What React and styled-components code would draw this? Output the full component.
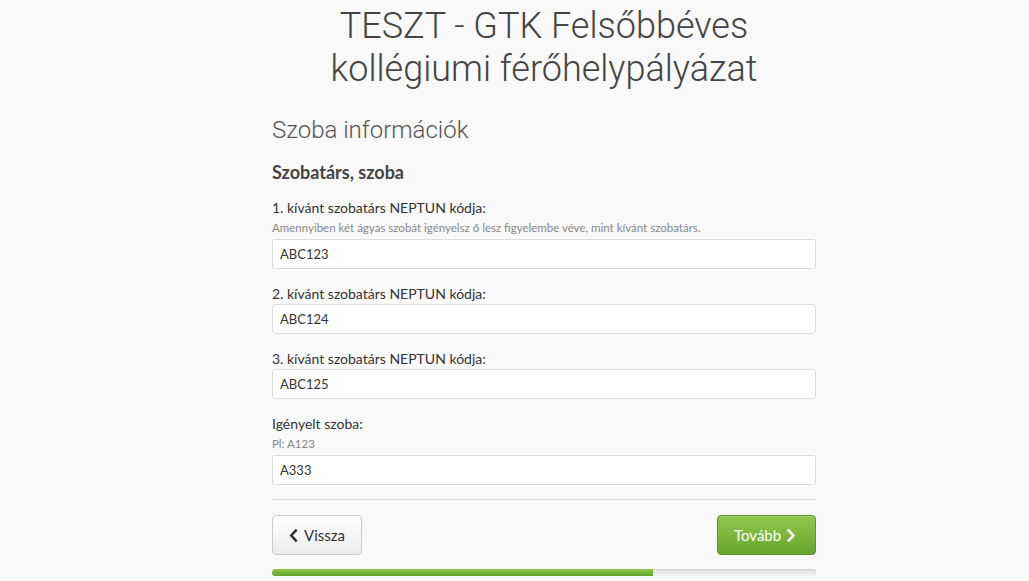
import React from 'react';
import styled, { createGlobalStyle } from 'styled-components';

const GlobalStyle = createGlobalStyle`
  html, body {
    margin: 0;
    padding: 0;
    background: #f9f9f9;
  }
  body {
    font-family: Lato, "Open Sans", sans-serif;
    color: #333;
  }
`;

const FIELDS = [
  { label: '1. kívánt szobatárs NEPTUN kódja:', help: 'Amennyiben két ágyas szobát igényelsz ő lesz figyelembe véve, mint kívánt szobatárs.', value: 'ABC123' },
  { label: '2. kívánt szobatárs NEPTUN kódja:', value: 'ABC124' },
  { label: '3. kívánt szobatárs NEPTUN kódja:', value: 'ABC125' },
  { label: 'Igényelt szoba:', help: 'Pl: A123', value: 'A333' },
];

function App() {
  return (
    <>
      <GlobalStyle />
      <Page>
        <Title>
          TESZT - GTK Felsőbbéves
          <br />
          kollégiumi férőhelypályázat
        </Title>
        <Section>
          <SectionTitle>Szoba információk</SectionTitle>
          <SubTitle>Szobatárs, szoba</SubTitle>
          {FIELDS.map((f) => (
            <Field key={f.label}>
              <Label>{f.label}</Label>
              {f.help && <Help>{f.help}</Help>}
              <Input defaultValue={f.value} />
            </Field>
          ))}
          <Divider />
          <Actions>
            <BackButton>
              <Chevron viewBox="0 0 10 14" left>
                <path d="M7.5 1.5 L2.5 7 L7.5 12.5" />
              </Chevron>
              Vissza
            </BackButton>
            <NextButton>
              Tovább
              <Chevron viewBox="0 0 10 14">
                <path d="M2.5 1.5 L7.5 7 L2.5 12.5" />
              </Chevron>
            </NextButton>
          </Actions>
          <Progress>
            <ProgressFill style={{ width: '70%' }} />
          </Progress>
        </Section>
      </Page>
    </>
  );
}

const Page = styled.div`
  width: 544px;
  margin-left: 272px;
  padding-top: 5px;
`;
const Title = styled.h1`
  margin: 0;
  font-family: Roboto, sans-serif;
  font-weight: 300;
  font-size: 36px;
  line-height: 43px;
  color: #444;
  text-align: center;
  white-space: nowrap;
`;
const Section = styled.div`
  padding-top: 25px;
`;
const SectionTitle = styled.h2`
  margin: 0;
  font-family: Roboto, sans-serif;
  font-weight: 300;
  font-size: 24px;
  line-height: 28px;
  color: #555;
`;
const SubTitle = styled.h3`
  margin: 18px 0 17px;
  font-size: 18px;
  line-height: 20px;
  font-weight: 700;
  color: #444;
`;
const Field = styled.div`
  display: flex;
  flex-direction: column;
  margin-bottom: 16px;
`;
const Label = styled.label`
  font-size: 14px;
  line-height: 18px;
  color: #333;
  margin-bottom: 1px;
`;
const Help = styled.span`
  font-size: 11.5px;
  line-height: 14px;
  color: #888;
  margin: 3px 0 4px;
`;
const Input = styled.input`
  box-sizing: border-box;
  height: 30px;
  width: 100%;
  border: 1px solid #ddd;
  border-radius: 3px;
  background: #fff;
  padding: 0 7px;
  font-family: Lato, sans-serif;
  font-size: 13px;
  color: #333;
  outline: none;
`;
const Divider = styled.hr`
  border: 0;
  border-top: 1px solid #ddd;
  margin: -2px 0 15px;
`;
const Actions = styled.div`
  display: flex;
  justify-content: space-between;
  align-items: center;
`;
const Button = styled.button`
  box-sizing: border-box;
  height: 40px;
  display: inline-flex;
  align-items: center;
  gap: 5px;
  border-radius: 4px;
  font-family: Lato, sans-serif;
  font-size: 15px;
  cursor: pointer;
`;
const BackButton = styled(Button)`
  width: 90px;
  padding: 0 16px;
  background: linear-gradient(#fff, #ececec);
  border: 1px solid #ccc;
  color: #333;
`;
const NextButton = styled(Button)`
  width: 99px;
  padding: 0 16px;
  background: linear-gradient(#8fc94a, #68a52e);
  border: 1px solid #5e9528;
  color: #fff;
  box-shadow: inset 0 1px 0 rgba(255, 255, 255, 0.2);
`;
const Chevron = styled.svg`
  width: 10px;
  height: 13px;
  fill: none;
  stroke: currentColor;
  stroke-width: 2.8;
  stroke-linecap: square;
  stroke-linejoin: miter;
  margin-right: ${(p) => (p.left ? '1px' : '0')};
`;
const Progress = styled.div`
  margin-top: 14px;
  height: 7px;
  border-radius: 4px;
  background: linear-gradient(#e4e4e4, #f2f2f2);
  box-shadow: inset 0 1px 2px rgba(0, 0, 0, 0.1);
  overflow: hidden;
`;
const ProgressFill = styled.div`
  height: 100%;
  background: linear-gradient(#8cc748, #63a22a);
`;

export default App;
